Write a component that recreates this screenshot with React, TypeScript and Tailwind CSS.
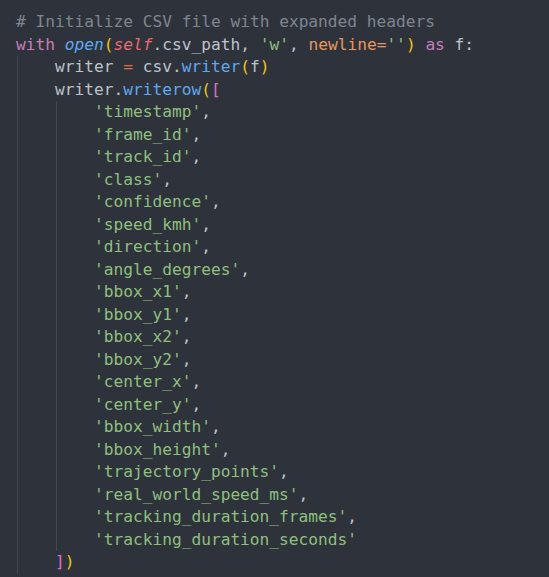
import React from "react";

type Tok = { t: string; c?: string };

const C = {
  text: "text-[#bcc2cd]",
  comment: "text-[#7f8590]",
  kw: "text-[#c77dbb]",
  fn: "text-[#5ea8f0] italic",
  self: "text-[#e36a6f] italic",
  method: "text-[#5ea8f0]",
  str: "text-[#8fbf7f]",
  param: "text-[#e4985f]",
  op: "text-[#e0704a]",
  p1: "text-[#f0c419]",
  p2: "text-[#d86fd2]",
};

const fields = [
  "timestamp",
  "frame_id",
  "track_id",
  "class",
  "confidence",
  "speed_kmh",
  "direction",
  "angle_degrees",
  "bbox_x1",
  "bbox_y1",
  "bbox_x2",
  "bbox_y2",
  "center_x",
  "center_y",
  "bbox_width",
  "bbox_height",
  "trajectory_points",
  "real_world_speed_ms",
  "tracking_duration_frames",
  "tracking_duration_seconds",
];

// guides: number of indent levels that show a guide
const lines: { guides: number; indent: number; toks: Tok[] }[] = [
  { guides: 0, indent: 0, toks: [{ t: "# Initialize CSV file with expanded headers", c: C.comment }] },
  {
    guides: 0,
    indent: 0,
    toks: [
      { t: "with", c: C.kw },
      { t: " " },
      { t: "open", c: C.fn },
      { t: "(", c: C.p1 },
      { t: "self", c: C.self },
      { t: ".csv_path, " },
      { t: "'w'", c: C.str },
      { t: ", " },
      { t: "newline=", c: C.param },
      { t: "''", c: C.str },
      { t: ")", c: C.p1 },
      { t: " " },
      { t: "as", c: C.kw },
      { t: " f:" },
    ],
  },
  {
    guides: 1,
    indent: 1,
    toks: [
      { t: "writer " },
      { t: "=", c: C.op },
      { t: " csv." },
      { t: "writer", c: C.method },
      { t: "(", c: C.p1 },
      { t: "f" },
      { t: ")", c: C.p1 },
    ],
  },
  {
    guides: 1,
    indent: 1,
    toks: [
      { t: "writer." },
      { t: "writerow", c: C.method },
      { t: "(", c: C.p1 },
      { t: "[", c: C.p2 },
    ],
  },
  ...fields.map((f, i) => ({
    guides: 2,
    indent: 2,
    toks: [{ t: `'${f}'`, c: C.str }, ...(i < fields.length - 1 ? [{ t: "," }] : [])],
  })),
  {
    guides: 1,
    indent: 1,
    toks: [
      { t: "]", c: C.p2 },
      { t: ")", c: C.p1 },
    ],
  },
];

export default function App() {
  return (
    <div className="w-[549px] h-[577px] bg-[#2e333b] overflow-hidden pt-[11px] pl-[16px] font-['DejaVu_Sans_Mono',monospace] text-[16.2px] leading-[22.5px] text-[#bcc2cd]">
      {lines.map((line, i) => (
        <div key={i} className="flex h-[22.5px] whitespace-pre">
          {Array.from({ length: line.indent }).map((_, k) => (
            <span
              key={k}
              className={
                k < line.guides
                  ? "inline-block w-[4ch] h-full bg-[linear-gradient(to_right,transparent_1px,#414753_1px,#414753_2px,transparent_2px)]"
                  : "inline-block w-[4ch] h-full"
              }
            />
          ))}
          <span>
            {line.toks.map((tk, j) => (
              <span key={j} className={tk.c ?? C.text}>
                {tk.t}
              </span>
            ))}
          </span>
        </div>
      ))}
    </div>
  );
}
